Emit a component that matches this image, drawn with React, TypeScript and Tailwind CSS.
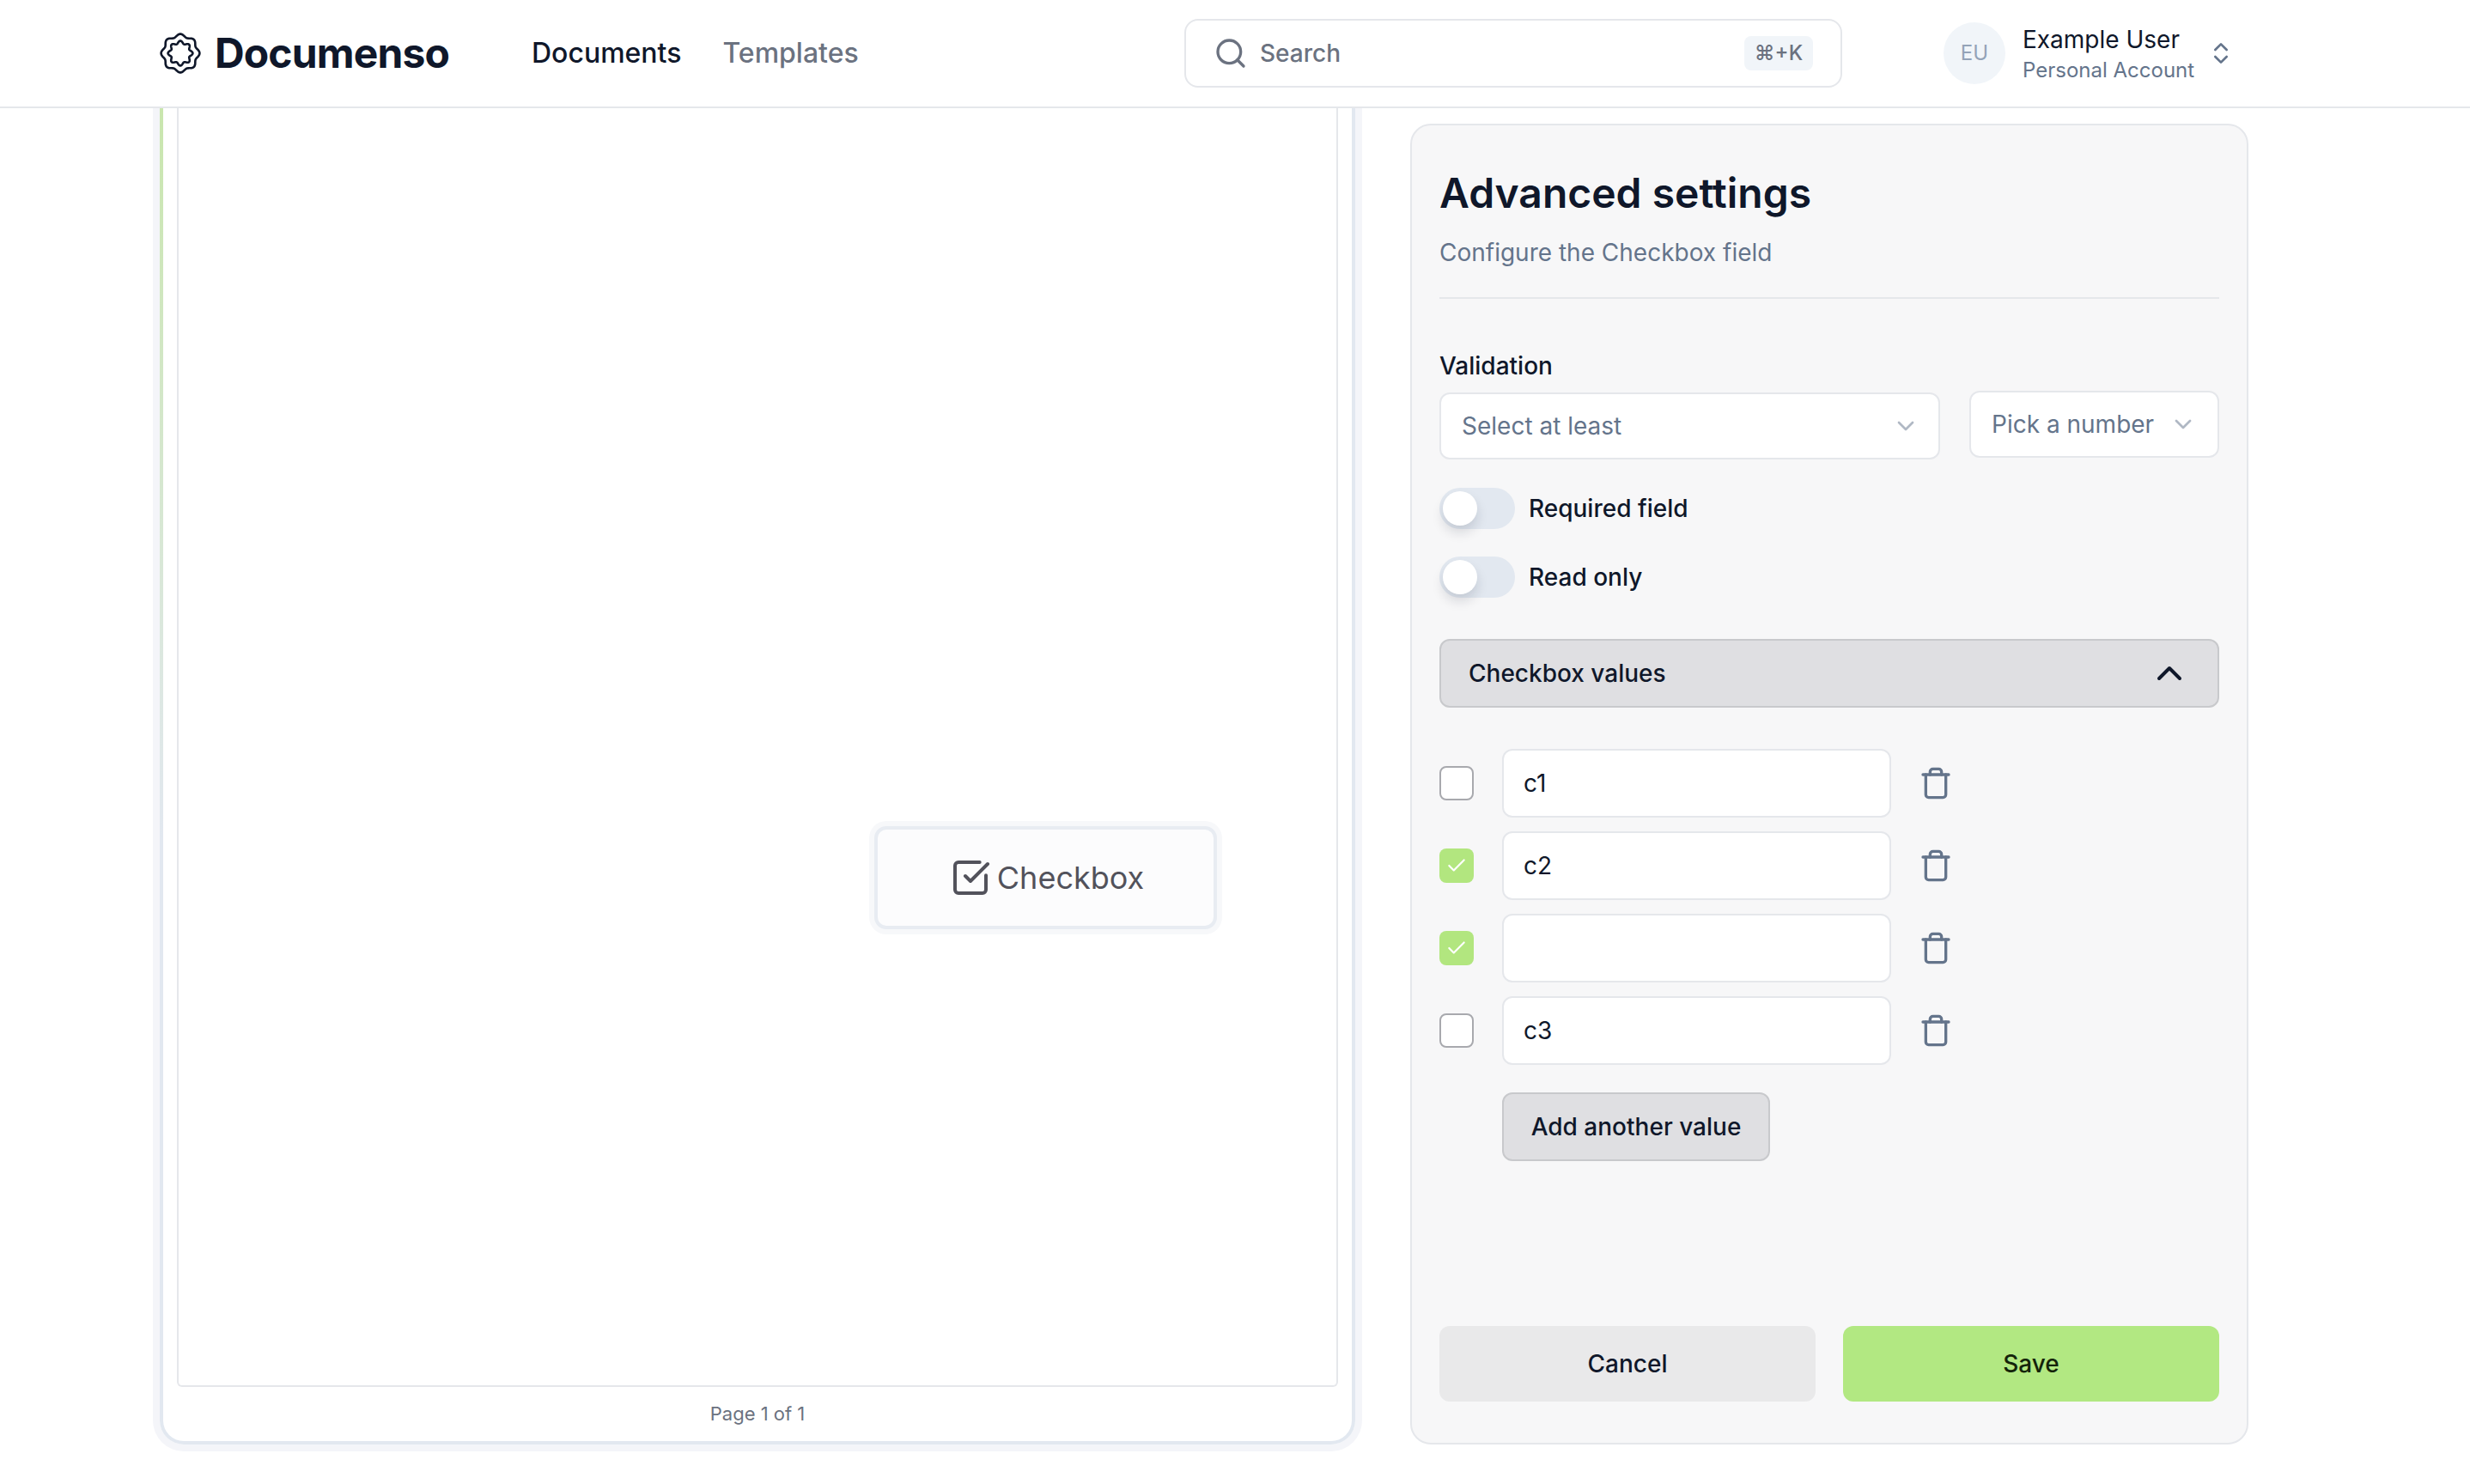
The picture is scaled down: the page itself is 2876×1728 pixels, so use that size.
import { Check, ChevronDown, ChevronUp, ChevronsUpDown, Search, SquareCheckBig, Trash } from "lucide-react";

// wavy ring for the logo, r = base + depth * cos(8a)
const ring = (base: number, depth: number) => {
  const pts: string[] = [];
  for (let i = 0; i < 240; i++) {
    const a = (i / 240) * Math.PI * 2;
    const r = base + depth * Math.cos(8 * a);
    pts.push(`${(24 + r * Math.sin(a)).toFixed(2)} ${(24 - r * Math.cos(a)).toFixed(2)}`);
  }
  return `M${pts.join("L")}Z`;
};

const Logo = () => (
  <svg width="48" height="48" viewBox="0 0 48 48" fill="none" stroke="#0f172a" strokeWidth="2.6">
    <path d={ring(20.8, 1.6)} />
    <path d={ring(12.8, 1.6)} />
  </svg>
);

const Toggle = ({ label }: { label: string }) => (
  <div className="flex items-center gap-[16px]">
    <div className="flex h-[48px] w-[88px] items-center rounded-full bg-[#e2e8f0] pl-[4px]">
      <div className="h-[40px] w-[40px] rounded-full bg-white shadow-[0_8px_14px_rgba(15,23,42,0.14)]" />
    </div>
    <span className="text-[28px] font-medium">{label}</span>
  </div>
);

const ValueRow = ({ value, checked }: { value: string; checked: boolean }) => (
  <div className="flex h-[80px] items-center">
    {checked ? (
      <div className="flex h-[40px] w-[40px] items-center justify-center rounded-[8px] bg-[#b2e67f] text-white">
        <Check size={26} strokeWidth={2} />
      </div>
    ) : (
      <div className="h-[40px] w-[40px] rounded-[8px] border-2 border-[#a8a9ae] bg-white" />
    )}
    <input
      readOnly
      value={value}
      className="ml-[33px] h-[80px] w-[453px] rounded-[12px] border-2 border-[#e5e7eb] bg-white px-[23px] text-[28px] outline-none"
    />
    <Trash size={40} strokeWidth={2} className="ml-[32px] text-[#64748b]" />
  </div>
);

export default function App() {
  return (
    <div className="flex h-[1728px] flex-col overflow-hidden bg-white font-[family-name:Inter,sans-serif] text-[#0f172a]">
      <header className="relative z-10 flex h-[126px] items-center border-b-2 border-[#e5e7eb] bg-white pl-[186px]">
        <Logo />
        <span className="ml-[16px] w-[272px] text-[48px] font-bold tracking-[-0.018em]">Documenso</span>
        <nav className="ml-[97px] flex w-[380px] gap-[48px] text-[32px] font-medium">
          <span>Documents</span>
          <span className="text-[#6b7280]">Templates</span>
        </nav>
        <div className="ml-[380px] flex h-[80px] w-[766px] items-center rounded-[16px] border-2 border-[#e5e7eb] pl-[32px] pr-[32px] text-[28px] font-medium text-[#6b7280]">
          <Search size={40} strokeWidth={2} />
          <span className="ml-[14px]">Search</span>
          <span className="ml-auto flex h-[40px] w-[80px] items-center justify-center rounded-[8px] bg-[#f1f5f9] text-[24px] font-medium">⌘+K</span>
        </div>
        <div className="ml-[118px] flex h-[72px] w-[72px] items-center justify-center rounded-full bg-[#f1f5f9] text-[24px] text-[#94a3b8]">EU</div>
        <div className="ml-[20px] flex flex-col">
          <span className="text-[28px] leading-[40px]">Example User</span>
          <span className="text-[24px] leading-[32px] text-[#64748b]">Personal Account</span>
        </div>
        <ChevronsUpDown size={32} strokeWidth={2} className="ml-[15px] text-[#64748b]" />
      </header>

      <main className="flex items-start pl-[186px]">
        <div className="h-[1556px] w-[1392px] rounded-b-[28px] bg-[radial-gradient(circle_at_0_0,#c9e6ae_0,#e2e8f0_850px)] px-[4px] pb-[4px] shadow-[0_0_0_8px_#f4f5f9]">
          <div className="flex h-full flex-col rounded-b-[24px] bg-white px-[16px]">
            <div className="relative h-[1489px] rounded-b-[6px] border-2 border-t-0 border-[#e5e7eb]">
              <div className="absolute left-[810px] top-[836px] flex h-[120px] w-[399px] items-center justify-center gap-[7px] rounded-[14px] border-[4px] border-[#e8ecf2] bg-[#fcfcfd] pl-[3px] text-[36px] text-[#52525b] shadow-[0_0_0_6px_#f7f8fa]">
                <SquareCheckBig size={48} strokeWidth={2} />
                <span>Checkbox</span>
              </div>
            </div>
            <p className="flex flex-1 items-center justify-center text-[22px] text-[#6b7280]">Page 1 of 1</p>
          </div>
        </div>

        <aside className="ml-[64px] mt-[18px] flex h-[1538px] w-[976px] flex-col rounded-[24px] border-2 border-[#e5e7eb] bg-[#f7f7f8] px-[32px] pb-[48px] pt-[51px]">
          <h1 className="text-[48px] font-semibold leading-[56px]">Advanced settings</h1>
          <p className="mt-[21px] text-[28px] leading-[40px] text-[#64748b]">Configure the Checkbox field</p>
          <div className="mt-[32px] h-[2px] bg-[#e5e7eb]" />

          <label className="mt-[58px] text-[28px] font-medium leading-[40px]">Validation</label>
          <div className="mt-[11px] flex items-start gap-[34px] text-[28px] text-[#64748b]">
            <div className="flex h-[78px] w-[583px] items-center justify-between rounded-[12px] border-2 border-[#e5e7eb] bg-white pl-[24px] pr-[22px]">
              <span>Select at least</span>
              <ChevronDown size={32} strokeWidth={2} className="opacity-50" />
            </div>
            <div className="-mt-[2px] flex h-[78px] w-[291px] items-center justify-between rounded-[12px] border-2 border-[#e5e7eb] bg-white pl-[24px] pr-[24px]">
              <span>Pick a number</span>
              <ChevronDown size={32} strokeWidth={2} className="opacity-50" />
            </div>
          </div>

          <div className="mt-[33px] flex flex-col gap-[32px]">
            <Toggle label="Required field" />
            <Toggle label="Read only" />
          </div>

          <button className="mt-[48px] flex h-[80px] items-center justify-between rounded-[12px] border-2 border-[#c8c9cc] bg-[#dfdfe2] pl-[32px] pr-[32px] text-[28px] font-medium">
            <span>Checkbox values</span>
            <ChevronUp size={48} strokeWidth={2} />
          </button>

          <div className="mt-[48px] flex flex-col gap-[16px]">
            <ValueRow value="c1" checked={false} />
            <ValueRow value="c2" checked />
            <ValueRow value="" checked />
            <ValueRow value="c3" checked={false} />
          </div>

          <button className="ml-[73px] mt-[32px] h-[80px] w-[312px] rounded-[12px] border-2 border-[#c8c9cc] bg-[#dfdfe2] text-[28px] font-medium">
            Add another value
          </button>

          <div className="mt-auto flex gap-[32px] text-[28px] font-medium">
            <button className="h-[88px] flex-1 rounded-[12px] bg-[#e9e9ea]">Cancel</button>
            <button className="h-[88px] flex-1 rounded-[12px] bg-[#b2e882] text-[#14240a]">Save</button>
          </div>
        </aside>
      </main>
    </div>
  );
}
